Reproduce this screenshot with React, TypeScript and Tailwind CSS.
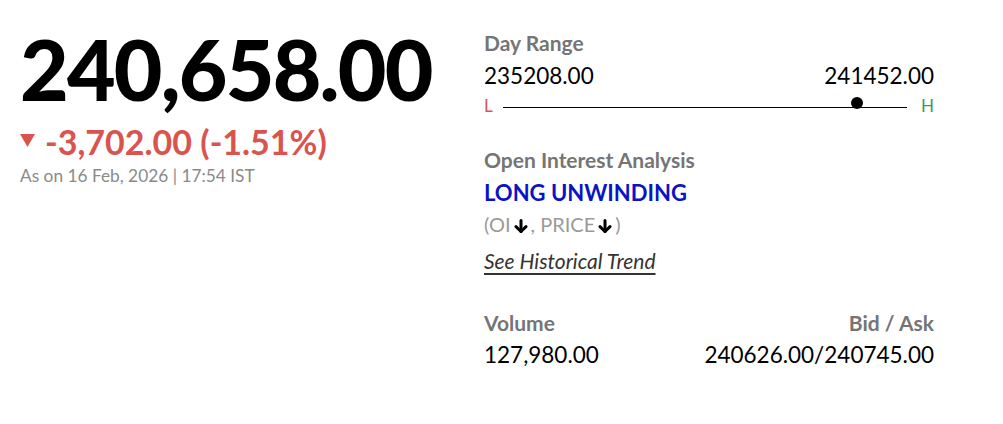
function DownArrow() {
  return (
    <svg
      className="inline-block mx-[3px] align-[-1px]"
      width="14"
      height="14"
      viewBox="0 0 14 14"
      fill="none"
      stroke="#000"
      strokeWidth="3"
      strokeLinecap="round"
      strokeLinejoin="round"
    >
      <path d="M7 1.5v11" />
      <path d="M2 7.6l5 4.9 5-4.9" />
    </svg>
  );
}

function DayRange() {
  return (
    <div>
      <div className="text-[21px] leading-[24px] font-bold text-[#757575]">Day Range</div>
      <div className="mt-[7px] flex justify-between text-[22.5px] leading-[28px] text-black">
        <span>235208.00</span>
        <span>241452.00</span>
      </div>
      <div className="mt-[7px] flex items-center h-[18px]">
        <span className="text-[17px] leading-[18px] text-[#d9534f] w-[19px]">L</span>
        <div className="relative flex-1 h-px bg-black mt-[3px]">
          <span className="absolute right-[44px] bottom-[-1px] w-3 h-3 rounded-full bg-black" />
        </div>
        <span className="text-[17px] leading-[18px] text-[#3c9a6a] w-[27px] text-right">H</span>
      </div>
    </div>
  );
}

export default function App() {
  return (
    <div
      className="flex pl-5 pt-[27px] bg-white min-h-[424px]"
      style={{ fontFamily: 'Lato, "Noto Sans", sans-serif' }}
    >
      <div className="w-[464px]">
        <div className="text-[84px] leading-[84px] font-black text-black tracking-[-1.8px]">
          240,658.00
        </div>
        <div className="mt-[11px] flex items-start text-[34px] leading-[40px] font-bold text-[#d9534f]">
          <svg className="mt-[12px] mr-[10px] shrink-0" width="15" height="13" viewBox="0 0 15 13">
            <path d="M0 0h15L7.5 13z" fill="#d9534f" />
          </svg>
          <span>-3,702.00 (-1.51%)</span>
        </div>
        <div className="mt-[3px] text-[17.3px] leading-[22px] text-[#8a8a8a]">
          As on 16 Feb, 2026 | 17:54 IST
        </div>
      </div>
      <div className="w-[450px] mt-[4px]">
        <DayRange />
        <div className="mt-[33px] text-[21px] leading-[24px] font-bold text-[#757575]">
          Open Interest Analysis
        </div>
        <div className="mt-[7px] text-[22px] leading-[28px] font-bold text-[#0a14c4]">
          LONG UNWINDING
        </div>
        <div className="mt-[3px] text-[20px] leading-[28px] text-[#9a9a9a]">
          (OI<DownArrow />, PRICE<DownArrow />)
        </div>
        <div className="mt-[9px] text-[21px] leading-[28px] italic underline underline-offset-[4px] text-[#333]">
          See Historical Trend
        </div>
        <div className="mt-[36px] flex justify-between text-[21px] leading-[24px] font-bold text-[#757575]">
          <span>Volume</span>
          <span>Bid / Ask</span>
        </div>
        <div className="mt-[6px] flex justify-between text-[22.5px] leading-[28px] text-black">
          <span>127,980.00</span>
          <span>240626.00/240745.00</span>
        </div>
      </div>
    </div>
  );
}
